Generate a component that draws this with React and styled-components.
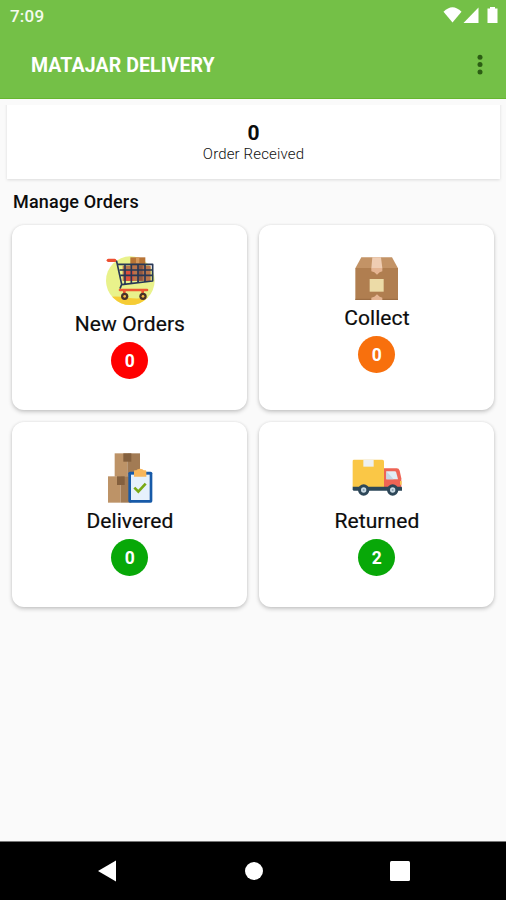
import React from "react";
import styled, { createGlobalStyle } from "styled-components";

const GlobalStyle = createGlobalStyle`
  * { box-sizing: border-box; }
  body { margin: 0; background: #fafafa; font-family: Roboto, sans-serif; color: #0c0c0c; }
`;

const Screen = styled.div`
  width: 506px;
  height: 900px;
  display: flex;
  flex-direction: column;
  background: #fafafa;
  overflow: hidden;
`;

const Header = styled.header`
  height: 99px;
  flex: none;
  background: #74c047;
  border-bottom: 1px solid #66b62f;
  color: #fff;
`;

const StatusBar = styled.div`
  height: 32px;
  padding: 0 7px 0 10px;
  display: flex;
  align-items: center;
  justify-content: space-between;
`;

const Clock = styled.span`
  font-size: 17px;
  line-height: 20px;
  font-weight: 500;
  letter-spacing: 0.2px;
  color: #f4fbee;
`;

const StatusIcons = styled.svg`
  width: 56px;
  height: 18px;
  display: block;
`;

const AppBar = styled.div`
  height: 66px;
  padding: 0 20px 0 31px;
  display: flex;
  align-items: center;
  justify-content: space-between;
`;

const Title = styled.h1`
  margin: 1px 0 0;
  font-size: 19.5px;
  line-height: 24px;
  font-weight: 700;
  letter-spacing: 0.1px;
`;

const MenuButton = styled.button`
  padding: 0;
  border: 0;
  background: none;
  display: flex;
  svg { display: block; }
`;

const Content = styled.main`
  flex: 1;
  padding: 1px 6px 0 7px;
`;

const Summary = styled.section`
  height: 79px;
  padding-top: 21px;
  background: #fff;
  box-shadow: 0 1px 3px rgba(0, 0, 0, 0.13);
  clip-path: inset(5px -5px -5px -5px);
  text-align: center;
`;

const SummaryCount = styled.div`
  font-size: 21px;
  line-height: 24px;
  font-weight: 700;
`;

const SummaryLabel = styled.div`
  font-size: 15px;
  line-height: 18px;
  color: #111;
  font-weight: 300;
  letter-spacing: 0.15px;
`;

const SectionTitle = styled.h2`
  margin: 12px 0 0 6px;
  font-size: 18px;
  line-height: 22px;
  font-weight: 500;
  letter-spacing: 0.18px;
`;

const Grid = styled.div`
  margin: 12px 4.6px 0 5.4px;
  display: grid;
  grid-template-columns: 235px 235px;
  column-gap: 12px;
  row-gap: 12px;
`;

const Card = styled.article`
  height: 185px;
  padding-top: 31px;
  border-radius: 12px;
  background: #fff;
  box-shadow: 0 2px 4px rgba(0, 0, 0, 0.2), 0 0 3px rgba(0, 0, 0, 0.08);
  display: flex;
  flex-direction: column;
  align-items: center;
  svg { display: block; flex: none; }
`;

const CardLabel = styled.div`
  margin-top: 5px;
  font-size: 21px;
  line-height: 26px;
  font-weight: 400;
  letter-spacing: 0.08px;
  -webkit-text-stroke: 0.2px currentColor;
`;

const Badge = styled.div`
  width: 37px;
  height: 37px;
  margin-top: 5px;
  border-radius: 50%;
  background: ${(p) => p.$color};
  color: #fff;
  display: flex;
  align-items: center;
  justify-content: center;
  font-size: 17.5px;
  font-weight: 700;
`;

const NavBar = styled.nav`
  height: 59px;
  flex: none;
  border-top: 1px solid #777;
  background: #000;
  display: grid;
  grid-template-columns: 146px 148px 144px;
  justify-content: center;
  justify-items: center;
  align-items: center;
  svg { display: block; }
`;

const CartIcon = () => (
  <svg width="50" height="50" viewBox="45 33 150 150">
    <defs>
      <clipPath id="disc"><circle cx="121" cy="107" r="73" /></clipPath>
    </defs>
    <circle cx="121" cy="107" r="73" fill="#e9f28b" />
    <path clipPath="url(#disc)" d="M48 157q30-5 65 1t82-4v30H48z" fill="#f6cc35" />
    <rect x="121" y="37" width="45" height="28" fill="#b87436" />
    <rect x="138" y="37" width="10" height="18" fill="#d6995b" />
    <path d="M98 62h84v46H98z" fill="#b9744b" />
    <path d="M103 78h27v30h-27z" fill="#df503b" />
    <path d="M144 62h14v45h-14z" fill="#8f5843" />
    <path d="M72 46l8 3 15 69-5 13M84 58h104v50l-93 11M89 75h98M92 91h95M105 58v60M124 58v57M144 58v55M165 58v52" fill="none" stroke="#283856" strokeWidth="5" strokeLinejoin="round" />
    <path d="M55 46h19" stroke="#ed5032" strokeWidth="10" strokeLinecap="round" />
    <path d="M90 135h81M103 137v10M158 137v10" stroke="#ee5932" strokeWidth="8" strokeLinecap="round" />
    {[104, 159].map((x) => (
      <g key={x}>
        <circle cx={x} cy="154" r="11" fill="#493329" />
        <circle cx={x} cy="154" r="4" fill="#f8bd45" />
      </g>
    ))}
  </svg>
);

const BoxIcon = () => (
  <svg width="44" height="44" viewBox="45 30 132 132">
    <path d="M64 34h92l18 33H46z" fill="#c39366" />
    <path d="M46 66h128v96H46z" fill="#b07e50" />
    <path d="M97 34h26l4 33H94z" fill="#efcdb3" />
    <path d="M94 66h33v10l-8 3-8 7-8-7-9-3z" fill="#e5b593" />
    <rect x="89" y="99" width="42" height="38" fill="#ecdba7" />
    <path d="M46 160h128" stroke="#986a42" strokeWidth="3" />
    <path d="M94 162v-7l9-3 8-7 8 7 8 3v7z" fill="#e5b593" />
  </svg>
);

const DeliveredIcon = () => (
  <svg width="50" height="50" viewBox="45 39 150 150">
    <rect x="74" y="40" width="38" height="70" fill="#bd9367" />
    <rect x="112" y="40" width="38" height="70" fill="#a27b54" />
    <rect x="100" y="40" width="24" height="25" fill="#84603e" />
    <rect x="54" y="109" width="38" height="79" fill="#bd9367" />
    <rect x="92" y="109" width="32" height="79" fill="#a27b54" />
    <rect x="81" y="109" width="23" height="26" fill="#84603e" />
    <rect x="115" y="95" width="72" height="93" rx="5" fill="#175aa8" />
    <rect x="123" y="104" width="56" height="76" fill="#e6f1fc" />
    <path d="M134 91h5q2-5 11-5t11 5h5q3 0 3 4v15h-37V95q0-4 2-4z" fill="#f8b65a" />
    <path d="M133 143l12 12 22-24" fill="none" stroke="#79a915" strokeWidth="8" />
  </svg>
);

const TruckIcon = () => (
  <svg width="50" height="50" viewBox="36 39 150 150">
    <path d="M42 59h85q5 0 5 5v78H38V63q0-4 4-4z" fill="#fac746" />
    <path d="M70 59h31v21H70z" fill="#edf0f2" />
    <path d="M132 85h38q7 0 9 7l5 23v29h-52z" fill="#ee6455" />
    <path d="M139 94h25q4 0 5 4l5 20h-35z" fill="#e2edf4" />
    <path d="M139 94l22 24h-22z" fill="#c5d7e5" />
    <path d="M180 123h5v11h-5z" fill="#f9c953" />
    <path d="M38 140h146q2 0 2 3v9H41q-3 0-3-4z" fill="#2d4758" />
    {[71, 158].map((x) => (
      <g key={x}>
        <circle cx={x} cy="150" r="17" fill="#2d4758" />
        <circle cx={x} cy="150" r="8" fill="#cbdbe5" />
        <circle cx={x} cy="150" r="3" fill="#8ba3b3" />
      </g>
    ))}
  </svg>
);

const cards = [
  { label: "New Orders", count: 0, color: "#ff0000", Icon: CartIcon },
  { label: "Collect", count: 0, color: "#f8700d", Icon: BoxIcon },
  { label: "Delivered", count: 0, color: "#08a808", Icon: DeliveredIcon },
  { label: "Returned", count: 2, color: "#08a808", Icon: TruckIcon },
];

export default function App() {
  return (
    <Screen>
      <GlobalStyle />
      <Header>
        <StatusBar>
          <Clock>7:09</Clock>
          <StatusIcons viewBox="0 0 56 18" fill="#fff">
            <path d="M0.500 4.800Q9.500 -4.200 18.500 4.800L9.500 15.500z" />
            <path d="M20.500 16L35.500 0.500v15.500z" />
            <path d="M44.500 1.500h2.500V0h5v1.500H54.500v14.500h-10z" />
          </StatusIcons>
        </StatusBar>
        <AppBar>
          <Title>MATAJAR DELIVERY</Title>
          <MenuButton aria-label="More options">
            <svg width="12" height="22" fill="#2c5d14">
              <circle cx="6" cy="3.200" r="2.500" />
              <circle cx="6" cy="10.600" r="2.500" />
              <circle cx="6" cy="18" r="2.500" />
            </svg>
          </MenuButton>
        </AppBar>
      </Header>
      <Content>
        <Summary>
          <SummaryCount>0</SummaryCount>
          <SummaryLabel>Order Received</SummaryLabel>
        </Summary>
        <SectionTitle>Manage Orders</SectionTitle>
        <Grid>
          {cards.map(({ label, count, color, Icon }) => (
            <Card key={label}>
              <Icon />
              <CardLabel>{label}</CardLabel>
              <Badge $color={color}>{count}</Badge>
            </Card>
          ))}
        </Grid>
      </Content>
      <NavBar>
        <svg width="18" height="22" fill="#fff"><path d="M0 11L18 .5v21z" /></svg>
        <svg width="18" height="18" fill="#fff"><circle cx="9" cy="9" r="9" /></svg>
        <svg width="20" height="20" fill="#fff"><rect width="20" height="20" rx="1.500" /></svg>
      </NavBar>
    </Screen>
  );
}
